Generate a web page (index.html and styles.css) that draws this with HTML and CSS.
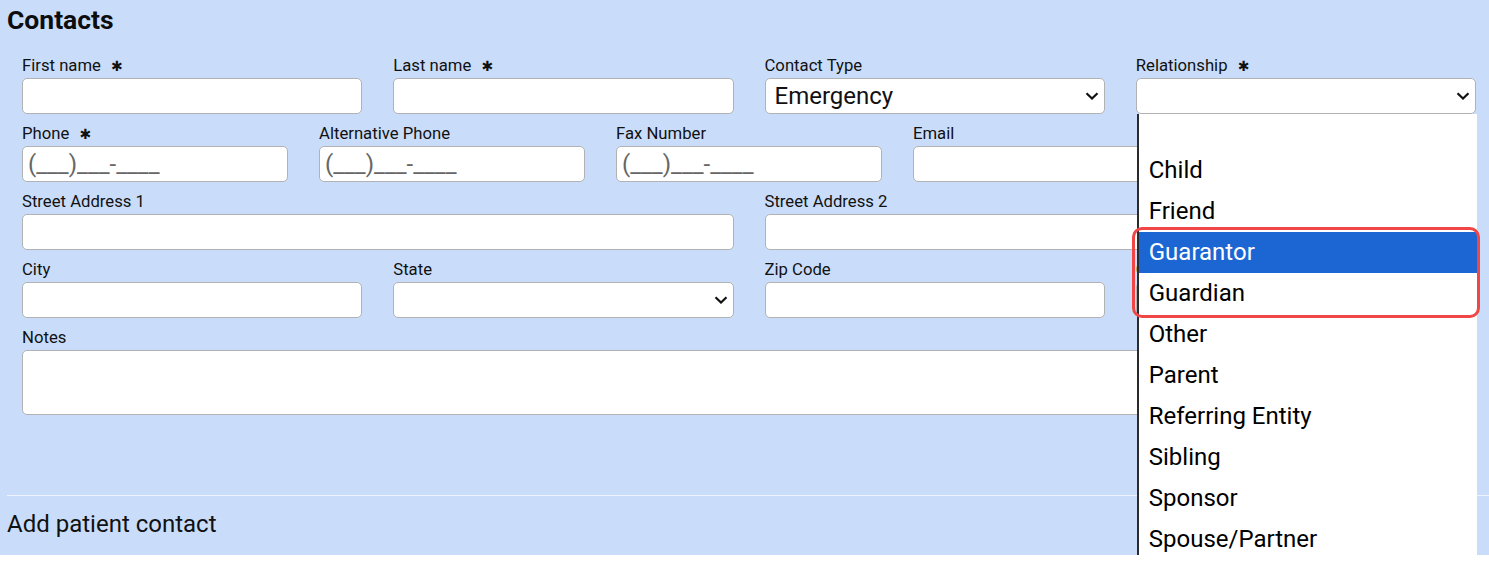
FILE: index.html
```html
<!DOCTYPE html>
<html lang="en">
<head>
    <meta charset="UTF-8">
    <meta name="viewport" content="width=device-width, initial-scale=1.0">
    <title>Contacts</title>
    <link rel="stylesheet" href="styles.css">
</head>
<body>
    <div class="contacts">
        <h2 class="contacts-title">Contacts</h2>

        <form class="contact-form">
            <!-- name / type / relationship -->
            <div class="form-row cols-4">
                <div class="field">
                    <label>First name <span class="req">&#10033;</span></label>
                    <input type="text" class="text-input">
                </div>
                <div class="field">
                    <label>Last name <span class="req">&#10033;</span></label>
                    <input type="text" class="text-input">
                </div>
                <div class="field">
                    <label>Contact Type</label>
                    <div class="select-wrap">
                        <select class="select-input">
                            <option selected>Emergency</option>
                            <option>Primary</option>
                        </select>
                        <svg class="chevron" width="14" height="8" viewBox="0 0 14 8"><polyline points="1.5,1.2 7,6.5 12.5,1.2" fill="none" stroke="#111" stroke-width="2.2"/></svg>
                    </div>
                </div>
                <div class="field field-open">
                    <label>Relationship <span class="req">&#10033;</span></label>
                    <div class="select-wrap">
                        <select class="select-input">
                            <option selected></option>
                        </select>
                        <svg class="chevron" width="14" height="8" viewBox="0 0 14 8"><polyline points="1.5,1.2 7,6.5 12.5,1.2" fill="none" stroke="#111" stroke-width="2.2"/></svg>
                    </div>
                    <ul class="dropdown">
                        <li class="option option-blank"></li>
                        <li class="option">Child</li>
                        <li class="option">Friend</li>
                        <li class="callout">
                            <div class="option selected">Guarantor</div>
                            <div class="option">Guardian</div>
                        </li>
                        <li class="option">Other</li>
                        <li class="option">Parent</li>
                        <li class="option">Referring Entity</li>
                        <li class="option">Sibling</li>
                        <li class="option">Sponsor</li>
                        <li class="option">Spouse/Partner</li>
                    </ul>
                </div>
            </div>

            <!-- phones / email -->
            <div class="form-row cols-5">
                <div class="field">
                    <label>Phone <span class="req">&#10033;</span></label>
                    <input type="text" class="text-input mask" placeholder="(___)___-____">
                </div>
                <div class="field">
                    <label>Alternative Phone</label>
                    <input type="text" class="text-input mask" placeholder="(___)___-____">
                </div>
                <div class="field">
                    <label>Fax Number</label>
                    <input type="text" class="text-input mask" placeholder="(___)___-____">
                </div>
                <div class="field">
                    <label>Email</label>
                    <input type="text" class="text-input">
                </div>
                <div class="field">
                    <label>Preferred Contact</label>
                    <input type="text" class="text-input">
                </div>
            </div>

            <!-- address -->
            <div class="form-row cols-4">
                <div class="field span-2">
                    <label>Street Address 1</label>
                    <input type="text" class="text-input">
                </div>
                <div class="field span-2">
                    <label>Street Address 2</label>
                    <input type="text" class="text-input">
                </div>
            </div>

            <div class="form-row cols-4">
                <div class="field">
                    <label>City</label>
                    <input type="text" class="text-input">
                </div>
                <div class="field">
                    <label>State</label>
                    <div class="select-wrap">
                        <select class="select-input">
                            <option selected></option>
                        </select>
                        <svg class="chevron" width="14" height="8" viewBox="0 0 14 8"><polyline points="1.5,1.2 7,6.5 12.5,1.2" fill="none" stroke="#111" stroke-width="2.2"/></svg>
                    </div>
                </div>
                <div class="field">
                    <label>Zip Code</label>
                    <input type="text" class="text-input">
                </div>
                <div class="field">
                    <label>Country</label>
                    <input type="text" class="text-input">
                </div>
            </div>

            <div class="form-row">
                <div class="field">
                    <label>Notes</label>
                    <textarea class="text-input notes"></textarea>
                </div>
            </div>
        </form>

        <div class="contacts-footer">Add patient contact</div>
    </div>
</body>
</html>
```

FILE: styles.css
```css
body {
    margin: 0;
    padding: 0;
    background: white;
    font-family: Roboto, "Liberation Sans", Arial, sans-serif;
    color: #111;
}

.contacts {
    background-color: #c9ddfb;
}

.contacts-title {
    margin: 0;
    padding: 5px 7px 0;
    font-size: 26.5px;
    line-height: 30px;
    font-weight: 700;
    color: #0d0d0d;
}

.contact-form {
    display: flex;
    flex-direction: column;
    gap: 8px;
    padding: 18.5px 13px 80px 22px;
}

.form-row {
    display: grid;
    grid-template-columns: 1fr;
    column-gap: 31px;
}

.form-row.cols-4 {
    grid-template-columns: repeat(4, 1fr);
}

.form-row.cols-5 {
    grid-template-columns: repeat(5, 1fr);
}

.span-2 {
    grid-column: span 2;
}

.field {
    display: flex;
    flex-direction: column;
    min-width: 0;
}

.field label {
    display: block;
    font-size: 16.7px;
    line-height: 24px;
    color: #111;
    white-space: nowrap;
}

.req {
    margin-left: 6px;
    font-family: "DejaVu Sans", sans-serif;
    font-size: 14px;
    color: #111;
}

.text-input,
.select-input {
    box-sizing: border-box;
    width: 100%;
    height: 36px;
    margin: 0;
    padding: 0 5px;
    background: white;
    border: 1px solid #b2b2b2;
    border-radius: 5px;
    font-family: Roboto, "Liberation Sans", Arial, sans-serif;
    font-size: 24px;
    color: #111;
    outline: none;
}

.mask::placeholder {
    color: #666;
    opacity: 1;
}

.notes {
    height: 65px;
    resize: none;
}

.select-wrap {
    position: relative;
}

.select-input {
    appearance: none;
    -webkit-appearance: none;
    padding: 0 28px 0 9px;
}

.chevron {
    position: absolute;
    right: 6px;
    top: 14px;
    pointer-events: none;
}

/* open list of the relationship select */
.field-open {
    position: relative;
}

.dropdown {
    position: absolute;
    top: 60px;
    left: 1px;
    right: -1px;
    z-index: 10;
    margin: 0;
    padding: 0;
    list-style: none;
    background: white;
    border-left: 2px solid #2b2b2b;
    border-bottom: 2px solid #555;
}

.option {
    height: 41px;
    padding-left: 10px;
    font-size: 24px;
    line-height: 41px;
    color: #000;
}

.option-blank {
    height: 36px;
}

.option.selected {
    background-color: #1b66d2;
    color: white;
}

.callout {
    position: relative;
}

.callout::after {
    content: "";
    position: absolute;
    top: -5px;
    bottom: -4px;
    left: -7px;
    right: -3px;
    border: 3px solid #f04646;
    border-radius: 10px;
    pointer-events: none;
}

.contacts-footer {
    margin-left: 7px;
    padding-bottom: 3px;
    height: 56px;
    border-top: 1px solid #eef4fe;
    font-size: 24px;
    line-height: 56px;
    color: #111;
}
```
